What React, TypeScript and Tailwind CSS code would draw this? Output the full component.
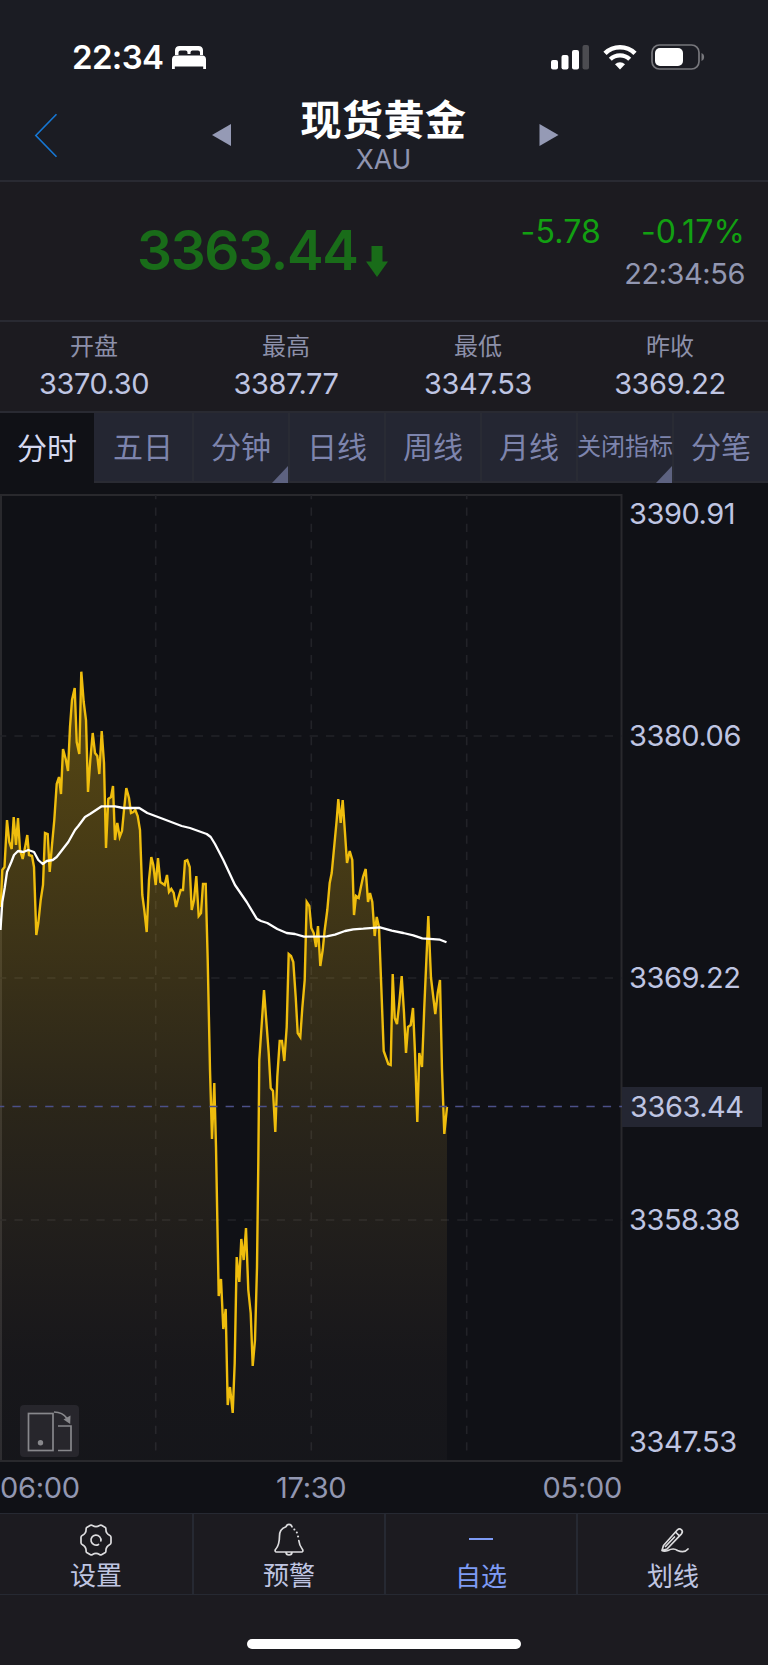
import { clsx } from "clsx"

const PRICE_LINE =
  "0.7,907 2.3,870 4.5,867 7,820 9.3,842 11.7,849 13.7,817 16,845 18,818 20,850 22.7,859 25.3,846 27.3,835 29,855 32,856 34,867 36.3,935 38.3,923 40.7,900 43,885 45,833 47.7,834 49.7,872 52,845 54.3,820 56.7,784 59,777 61,794 63,749 65.7,759 68,771 70,727 72,700 74.7,688 76.7,742 79.3,754 81.3,671.7 83.7,702 86,720 88,792 90.3,760 92.7,733 95,753 97.3,756 99.3,774 101.7,731 104,763 106,848 108.3,799 111,797 113,786 115,840 117.3,823 119.7,837 122,831 124,810 126.3,788 129,798 131,813 133.3,812 135.3,810 137.7,816 140,830 142.3,895 144.3,910 146.7,932 149,880 151.3,857 153.3,865 155.7,885 158,858 160.3,882 164.7,885 167,875 169,892 171.3,889 173.7,893 176,907 178.3,898 180.7,890 183,890 185,861 187.3,860 189.7,867 191.7,910 194,900 196.3,876 198.7,916 201,913 203,884 205.7,884 207.7,960 210,1070 212,1139 214.3,1083 216,1147 218.7,1296 221,1279 223.3,1329 225.7,1309 227.7,1405 230,1387 232.7,1413 234.7,1363 236.7,1257 239.3,1282 241.3,1239 243.7,1260 246,1228 248.3,1290 250.7,1313 252.7,1366 255,1340 257,1267 258.3,1163 259.3,1060 264,990 268.7,1053 270.7,1088 273,1091 275.3,1132 277.3,1077 279.7,1041 282,1041 284.3,1061 286.7,1027 288.7,954 291,956 293.3,962 295.7,997 297.7,1033 300.3,1037 302.3,1008 304.7,980 306.7,902 309.3,906 311.3,928 313.7,933 316,947 318,926 320.3,966 322.7,950 324.7,930 327.3,910 329.7,883 331.7,873 336.7,820 338.3,799 340.7,823 342.7,800 345,833 347,863 349.7,851 352.3,860 354,915 356,896 358.7,898 360.7,888 363,877 365.7,869 368,902 370,893 372.3,902 374.7,936 376.7,917 379,927 381.3,987 383.7,1051 388.3,1064 390.7,1065 392.7,974 394.7,1018 397,1024 399.3,1003 401.7,976 404,1013 406,1053 408,1027 410.7,1025 413,1008 415,1053 417.3,1122 419.3,1053 422,1067 424.3,1007 428.3,916 431,978 435.3,1014 437.7,993 440,980 442,1070 444.3,1134 447,1107"

const AVERAGE_LINE =
  "0.5,930 2.3,902 4.7,888 7,872 11.3,862 14,855 18,851 23.3,852 28.3,850 34,852 38.3,860 42.7,864 46.7,861 52.7,860 56.7,857 68.3,842 75,830 78.3,826 85,817 90,814 101.7,806.3 115,806.3 123.3,808 139.3,808 147.3,813 163.3,819 181.7,826 190,828 206.7,834 210.7,837 215,844 223.3,860 235,885 246.7,902 256.7,918.7 261,921 267.3,923 277.3,929 286.7,933 295,934 304,936.7 326.7,936.3 335,934.7 345,931 353.3,929.3 363.3,928.7 380,927.3 391.7,930.7 403.3,933 413.3,935.3 422.3,938.3 440,939.7 446.5,942.3"

const stats = [
  { label: "开盘", value: "3370.30" },
  { label: "最高", value: "3387.77" },
  { label: "最低", value: "3347.53" },
  { label: "昨收", value: "3369.22" },
]

const tabs = [
  { label: "分时", width: "w-[94px]", active: true },
  { label: "五日", width: "w-[100px]" },
  { label: "分钟", width: "w-24", menu: true },
  { label: "日线", width: "w-24" },
  { label: "周线", width: "w-24" },
  { label: "月线", width: "w-24" },
  { label: "关闭指标", width: "w-24", menu: true, small: true },
  { label: "分笔", width: "flex-1" },
]

function StatusBar() {
  return (
    <div className="flex h-[86px] items-start justify-between pt-[37px] pl-[72px] pr-[62px]">
      <div className="flex items-start">
        <span className="w-[100px] whitespace-nowrap text-[33px] leading-10 font-semibold tracking-[-0.02em] text-white">22:34</span>
        <svg className="mt-2" width="34" height="25" viewBox="0 0 34 25" fill="#fff">
          <path d="M3 10V5a4.500 4.500 0 0 1 4.500-4h19a4.500 4.500 0 0 1 4.500 4v5h-3V7.500a2 2 0 0 0-2-2h-5.500a2 2 0 0 0-2 2V9h-3V7.500a2 2 0 0 0-2-2H8.500a2 2 0 0 0-2 2V10z" />
          <path d="M4 10.500h26a4 4 0 0 1 4 4V24h-2.800v-2.500H2.800V24H0v-9.500a4 4 0 0 1 4-4z" />
        </svg>
      </div>
      <div className="flex items-start pt-[7px]">
        <svg width="39" height="26" viewBox="0 0 39 26" fill="#fff">
          <rect x="0" y="16" width="7" height="9.500" rx="2" />
          <rect x="10.500" y="11" width="7" height="14.500" rx="2" />
          <rect x="21" y="6" width="7" height="19.500" rx="2" />
          <rect x="31.500" y="1" width="6.500" height="24.500" rx="2" fill="#4c4c51" />
        </svg>
        <svg className="ml-[13px]" width="34" height="26" viewBox="0 0 34 26" fill="none" stroke="#fff">
          <path d="M2 9.300a21.500 21.500 0 0 1 30 0" strokeWidth="4.600" />
          <path d="M7.300 15.200a14 14 0 0 1 19.400 0" strokeWidth="4.300" />
          <path d="M17 25.500l-5-5.300a7.200 7.200 0 0 1 10 0z" fill="#fff" stroke="none" />
        </svg>
        <svg className="ml-[14px]" width="55" height="26" viewBox="0 0 55 26" fill="none">
          <rect x="1" y="1" width="47" height="24" rx="7.500" stroke="#77777c" strokeWidth="1.700" />
          <rect x="4" y="4" width="28" height="18" rx="5" fill="#fff" />
          <path d="M50.500 9c3.500 1.300 3.500 6.700 0 8z" fill="#77777c" />
        </svg>
      </div>
    </div>
  )
}

function TitleBar() {
  return (
    <div className="flex h-[94px] items-start pl-[34px]">
      <svg className="mt-[27px]" width="24" height="46" viewBox="0 0 24 46" fill="none" stroke="#1677d4" strokeWidth="1.600">
        <path d="M22.500 1.300L1.800 22.500l20.700 21.200" />
      </svg>
      <svg className="mt-[38px] ml-[154px]" width="20" height="23" viewBox="0 0 20 23" fill="#959ab5">
        <path d="M19 0v22L0 11z" />
      </svg>
      <div className="ml-[51px] flex w-[200px] flex-col items-center pt-[10px]">
        <h1 className="pl-px text-[41px] leading-[48px] font-bold tracking-[0.5px] text-white">现货黄金</h1>
        <p className="pl-px text-[26.5px] leading-[30px] text-[#8f94b0]">XAU</p>
      </div>
      <svg className="mt-[38px] ml-[56px]" width="20" height="23" viewBox="0 0 20 23" fill="#959ab5">
        <path d="M.5 0v22l19-11z" />
      </svg>
    </div>
  )
}

function Quote() {
  return (
    <div className="flex h-[140px] items-start justify-between border-b-2 border-[#292a32] bg-[#1c1b20] pr-[23px] pl-[137px]">
      <div className="flex items-start pt-[35px] text-[#196c19]">
        <span className="w-[229px] whitespace-nowrap text-[55px] leading-[67px] font-[560] tracking-[-0.024em]">3363.44</span>
        <svg className="mt-[28px]" width="22" height="33" viewBox="0 0 22 33" fill="currentColor">
          <path d="M5.500 1h11v15.500H22L11 32 0 16.500h5.500z" />
        </svg>
      </div>
      <div className="flex flex-col items-end">
        <div className="mt-[30px] flex gap-[40px] text-[32px] leading-[40px] tracking-[0.005em] text-[#12a012]">
          <span>-5.78</span>
          <span>-0.17%</span>
        </div>
        <span className="mt-[2px] text-[29px] leading-[40px] tracking-[-0.015em] text-[#9297b1]">22:34:56</span>
      </div>
    </div>
  )
}

function Stats() {
  return (
    <div className="-ml-0.5 grid h-[89px] w-[768px] grid-cols-4 pt-[8px] text-center">
      {stats.map((s) => (
        <div key={s.label}>
          <div className="text-[24px] leading-[34px] text-[#8c90a9]">{s.label}</div>
          <div className="text-[29px] leading-[40px] tracking-[-0.015em] text-[#bfc5e2]">{s.value}</div>
        </div>
      ))}
    </div>
  )
}

function Tabs() {
  return (
    <div className="flex h-[72px] border-t-2 border-[#292a32] bg-[#242632]">
      {tabs.map((t) => (
        <div
          key={t.label}
          className={clsx(
            "relative flex shrink-0 items-center justify-center whitespace-nowrap",
            t.width,
            t.active ? "bg-[#101116] text-[#d5d9f0]" : "border-r-2 border-b-2 border-r-[#292b34] border-b-[#2a2b33] text-[#7d84ad] last:border-r-0",
            t.small ? "text-[24px]" : "text-[30px]",
          )}
        >
          {t.label}
          {t.menu && (
            <svg className="absolute right-0 -bottom-0.5" width="16" height="17" viewBox="0 0 16 17" fill="#5d6280">
              <path d="M16 0v17H0z" />
            </svg>
          )}
        </div>
      ))}
    </div>
  )
}

function Chart() {
  return (
    <div className="relative flex h-[981px] bg-[#101116]">
      <svg width="622" height="981" viewBox="0 483 622 981" fill="none" className="shrink-0 overflow-visible">
        <defs>
          <linearGradient id="area" gradientUnits="userSpaceOnUse" x1="0" y1="495" x2="0" y2="1460">
            <stop offset="0" stopColor="#f0bc10" stopOpacity="0.4" />
            <stop offset="0.36" stopColor="#f0bc10" stopOpacity="0.25" />
            <stop offset="0.63" stopColor="#e8b830" stopOpacity="0.125" />
            <stop offset="0.9" stopColor="#d0a880" stopOpacity="0.04" />
            <stop offset="1" stopColor="#c0b0a0" stopOpacity="0.03" />
          </linearGradient>
        </defs>
        <rect x="1" y="495" width="620.500" height="966" stroke="#29292d" strokeWidth="2" />
        <g stroke="#222328" strokeWidth="1.600" strokeDasharray="8.300 8.100">
          <path d="M-2 736H622M-2 978H622M-2 1220H622" />
          <path d="M155.700 495V1455M311.300 495V1455M466.700 495V1455" strokeDashoffset="4" />
        </g>
        <polygon points={`0,1460 0,930 ${PRICE_LINE} 447,1460`} fill="url(#area)" />
        <polyline points={PRICE_LINE} stroke="#efbd0d" strokeWidth="2.400" />
        <path d="M-4 1106.500H622" stroke="#4b5089" strokeWidth="1.600" strokeDasharray="8.300 8.100" />
        <polyline points={AVERAGE_LINE} stroke="#fff" strokeWidth="2.300" strokeLinejoin="round" />
      </svg>
      <div className="flex flex-1 flex-col text-[29px] leading-10 tracking-[-0.016em] whitespace-nowrap text-[#bfc5e2]">
        <span className="mt-[11px] pl-[7px]">3390.91</span>
        <span className="mt-[182px] pl-[7px]">3380.06</span>
        <span className="mt-[202px] pl-[7px]">3369.22</span>
        <span className="mt-[89px] mr-[6px] bg-[#242632] pl-[8px]">3363.44</span>
        <span className="mt-[73px] pl-[7px]">3358.38</span>
        <span className="mt-[182px] pl-[7px]">3347.53</span>
      </div>
      <button className="absolute bottom-[7px] left-[20px] h-[52px] w-[59px] rounded-[4px] bg-[#27262c]" aria-label="旋转">
        <svg width="59" height="52" viewBox="0 0 59 52" fill="none" stroke="#88888c" strokeWidth="1.700">
          <rect x="8.500" y="8.500" width="24.500" height="37" />
          <circle cx="20.500" cy="37.800" r="2.700" fill="#88888c" stroke="none" />
          <path d="M38 21h13v24.500H38M34 7c6 0 10 2 13 6.500" />
          <path d="M43.500 14.500l7-4-.3 8.500z" fill="#88888c" stroke="none" />
        </svg>
      </button>
    </div>
  )
}

function BottomNav() {
  return (
    <nav className="grid h-[82px] grid-cols-[194px_192px_192px_1fr] border-y-[1.5px] border-[#262932] bg-[#1c1b20] text-[26px] leading-[32px] text-[#bfc5e2]">
      <div className="flex flex-col items-center border-r-2 border-[#262932] pt-[9px]">
        <svg width="34" height="34" viewBox="0 0 34 34" fill="none" stroke="#dcdcde" strokeWidth="1.700" strokeLinecap="round" strokeLinejoin="round">
          <path d="M11.500 2.200q1-.4 2 .3Q17 4.600 20.500 2.500q1-.7 2-.3l3.800 2.200q.7.600.6 1.800-.1 4 3.600 6.100 1.500.8 1.500 2v5.400q0 1.200-1.500 2-3.700 2.100-3.600 6.100.1 1.200-.6 1.800l-3.800 2.200q-1 .4-2-.3-3.500-2.100-7 0-1 .7-2 .3L7.700 29.600q-.7-.6-.6-1.800.1-4-3.600-6.100-1.500-.8-1.500-2v-5.400q0-1.200 1.500-2 3.700-2.100 3.600-6.100-.1-1.200.6-1.800z" />
          <path d="M19.500 21.400a5 5 0 1 1 2.400-3.500M17 22h.1" />
        </svg>
        <span className="mt-[3px]">设置</span>
      </div>
      <div className="flex flex-col items-center border-r-2 border-[#262932] pt-[9px]">
        <svg width="34" height="34" viewBox="0 0 34 34" fill="none" stroke="#dcdcde" strokeWidth="1.700" strokeLinecap="round" strokeLinejoin="round">
          <path d="M20 3.800q-.8-2.400-3-2.400t-3 2.400Q7.500 6 7.500 13c0 7-.8 10-4 13.500-.8 1.200-.3 2.500 1 2.500h25c1.300 0 1.800-1.300 1-2.500q-3.200-4-3.700-9M14 29q0 3 3 3t3-3" />
          <path d="M22.300 6.500h.1M24.800 9.500h.1M26 13.500h.1" strokeWidth="2" />
        </svg>
        <span className="mt-[3px]">预警</span>
      </div>
      <div className="flex flex-col items-center border-r-2 border-[#262932] pt-[9px] text-[#7e9bf5]">
        <svg width="34" height="34" viewBox="0 0 34 34" stroke="currentColor" strokeWidth="2">
          <path d="M5 16h24" />
        </svg>
        <span className="mt-[4px]">自选</span>
      </div>
      <div className="flex flex-col items-center pt-[9px]">
        <svg className="ml-[3px]" width="34" height="34" viewBox="0 0 34 34" fill="none" stroke="#dcdcde" strokeWidth="1.700" strokeLinecap="round" strokeLinejoin="round">
          <path d="M5.500 22.500L19.500 6.800q1.900-1.700 4 0 1.700 2 0 4L9 26 4 27.500zM17.500 9l3.900 3.900M7.500 23.500l9-9.500M4 27.500q2 1.300 6 0 5.500-3 9.500 0 7 2.800 10.500-1.500" />
        </svg>
        <span className="mt-[4px]">划线</span>
      </div>
    </nav>
  )
}

export default function App() {
  return (
    <div className="w-[769px] bg-white">
      <div className="flex h-[1665px] w-[768px] flex-col overflow-hidden bg-[#1c1b20] font-['Inter','Noto_Sans_CJK_SC',sans-serif]">
        <header className="h-[182px] border-b-2 border-[#292a32] bg-[#1b1c23]">
          <StatusBar />
          <TitleBar />
        </header>
        <Quote />
        <Stats />
        <Tabs />
        <Chart />
        <div className="flex h-[49px] shrink-0 bg-[#101116]">
          <div className="flex w-[622px] justify-between pt-[4px] text-[29px] leading-10 tracking-[-0.01em] text-[#9297b1]">
            <span>06:00</span>
            <span>17:30</span>
            <span>05:00</span>
          </div>
        </div>
        <BottomNav />
        <div className="mx-auto mt-[44px] h-[10px] w-[274px] rounded-full bg-white" />
      </div>
    </div>
  )
}
